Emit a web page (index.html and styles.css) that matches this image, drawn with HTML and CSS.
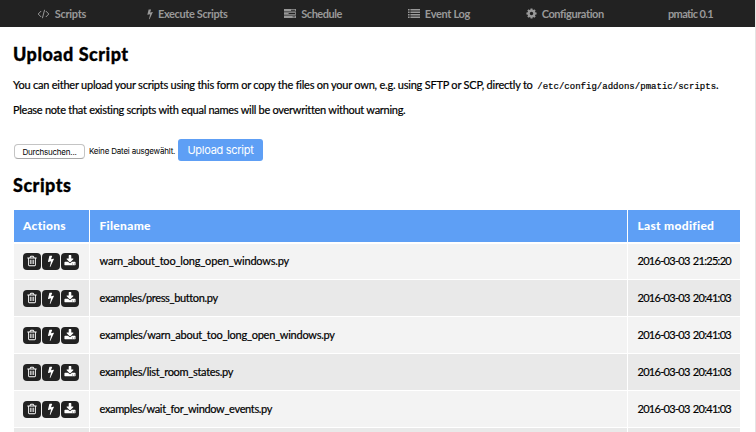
FILE: index.html
```html
<!DOCTYPE html>
<html lang="en">
<head>
<meta charset="utf-8">
<title>pmatic</title>
<link rel="stylesheet" href="styles.css">
</head>
<body>
<svg class="defs" width="0" height="0">
  <symbol id="trash" viewBox="0 0 1792 1792"><path d="M704 736v576q0 14-9 23t-23 9h-64q-14 0-23-9t-9-23v-576q0-14 9-23t23-9h64q14 0 23 9t9 23zm256 0v576q0 14-9 23t-23 9h-64q-14 0-23-9t-9-23v-576q0-14 9-23t23-9h64q14 0 23 9t9 23zm256 0v576q0 14-9 23t-23 9h-64q-14 0-23-9t-9-23v-576q0-14 9-23t23-9h64q14 0 23 9t9 23zm128 724v-948h-896v948q0 22 7 40.500t14.500 27 10.500 8.500h832q3 0 10.500-8.500t14.500-27 7-40.500zm-672-1076h448l-48-117q-7-9-17-11h-317q-10 2-17 11zm928 32v64q0 14-9 23t-23 9h-96v948q0 83-47 143.500t-113 60.500h-832q-66 0-113-58.500t-47-141.500v-952h-96q-14 0-23-9t-9-23v-64q0-14 9-23t23-9h309l70-167q15-37 54-63t79-26h320q40 0 79 26t54 63l70 167h309q14 0 23 9t9 23z"/></symbol>
  <symbol id="bolt" viewBox="0 0 1792 1792"><path d="M1333 566q18 20 7 44l-540 1157q-13 25-42 25-4 0-14-2-17-5-25.500-19t-4.500-30l197-808-406 101q-4 1-12 1-18 0-31-11-18-15-13-39l201-825q4-14 16-23t28-9h328q19 0 32 12.500t13 29.500q0 8-5 18l-171 463 396-98q8-2 12-2 19 0 34 15z"/></symbol>
  <symbol id="download" viewBox="0 0 1792 1792"><path d="M1344 1344q0-26-19-45t-45-19-45 19-19 45 19 45 45 19 45-19 19-45zm256 0q0-26-19-45t-45-19-45 19-19 45 19 45 45 19 45-19 19-45zm128-224v320q0 40-28 68t-68 28h-1472q-40 0-68-28t-28-68v-320q0-40 28-68t68-28h465l135 136q58 56 136 56t136-56l136-136h464q40 0 68 28t28 68zm-325-569q17 41-14 70l-448 448q-18 19-45 19t-45-19l-448-448q-31-29-14-70 17-39 59-39h256v-448q0-26 19-45t45-19h256q26 0 45 19t19 45v448h256q42 0 59 39z"/></symbol>
  <symbol id="cog" viewBox="0 0 1792 1792"><path d="M1152 896q0-106-75-181t-181-75-181 75-75 181 75 181 181 75 181-75 75-181zm512-109v222q0 12-8 23t-20 13l-185 28q-19 54-39 91 35 50 107 138 10 12 10 25t-9 23q-27 37-99 108t-94 71q-12 0-26-9l-138-108q-44 23-91 38-16 136-29 186-7 28-36 28h-222q-14 0-24.500-8.500t-11.500-21.500l-28-184q-49-16-90-37l-141 107q-10 9-25 9-14 0-25-11-126-114-165-168-7-10-7-23 0-12 8-23 15-21 51-66.500t54-70.500q-27-50-41-99l-183-27q-13-2-21-12.500t-8-23.500v-222q0-12 8-23t19-13l186-28q14-46 39-92-40-57-107-138-10-12-10-24 0-10 9-23 26-36 98.500-107.500t94.500-71.500q13 0 26 10l138 107q44-23 91-38 16-136 29-186 7-28 36-28h222q14 0 24.500 8.500t11.500 21.500l28 184q49 16 90 37l142-107q9-9 24-9 13 0 25 10 129 119 165 170 7 8 7 22 0 12-8 23-15 21-51 66.500t-54 70.500q26 50 41 98l183 28q13 2 21 12.500t8 23.500z"/></symbol>
</svg>

<nav class="nav">
  <a class="nav-item n-scripts"><svg width="13" height="10" viewBox="0 0 13 10" fill="none" stroke="currentColor"><path d="M4.200 2 1.200 5l3 3M8.800 2l3 3-3 3M7.600.8 5.400 9.200"/></svg><span>Scripts</span></a>
  <a class="nav-item n-execute"><svg class="bolt" width="6" height="12" viewBox="380 0 1000 1792"><use href="#bolt" width="1792" height="1792"/></svg><span>Execute Scripts</span></a>
  <a class="nav-item n-schedule"><svg width="12" height="9" viewBox="0 0 12 9" fill="currentColor"><path fill-rule="evenodd" d="M0 0h12v2.500H0zM7 .8v.9h4.200V.8zM0 3.300h12v2.500H0zM4.600 4.100V5h6.600v-.9zM0 6.600h12V9H0zM8.600 7.400v.8h2.600v-.8z"/></svg><span>Schedule</span></a>
  <a class="nav-item n-log"><svg width="12" height="9" viewBox="0 0 12 9" fill="currentColor"><path d="M0 0h1.600v1.400H0zM2.400 0H12v1.400H2.400zM0 2.500h1.600v1.400H0zM2.400 2.500H12v1.400H2.400zM0 5h1.600v1.400H0zM2.400 5H12v1.400H2.400zM0 7.500h1.600v1.400H0zM2.400 7.500H12v1.400H2.400z"/></svg><span>Event Log</span></a>
  <a class="nav-item n-config"><svg width="11" height="11" viewBox="64 64 1664 1664" fill="currentColor"><use href="#cog" width="1792" height="1792"/></svg><span>Configuration</span></a>
  <a class="nav-item n-version"><span>pmatic 0.1</span></a>
</nav>

<main class="content">
  <h1>Upload Script</h1>
  <p class="intro">You can either upload your scripts using this form or copy the files on your own, e.g. using SFTP or SCP, directly to <code>/etc/config/addons/pmatic/scripts</code>.</p>
  <p class="note">Please note that existing scripts with equal names will be overwritten without warning.</p>

  <form class="upload">
    <button type="button" class="browse">Durchsuchen...</button>
    <span class="nofile">Keine Datei ausgewählt.</span>
    <button type="button" class="submit">Upload script</button>
  </form>

  <h1>Scripts</h1>
  <table>
    <colgroup><col class="c-actions"><col class="c-file"><col class="c-date"></colgroup>
    <thead><tr><th>Actions</th><th>Filename</th><th>Last modified</th></tr></thead>
    <tbody>
      <tr><td><div class="actions"><a><svg><use href="#trash"/></svg></a><a><svg><use href="#bolt"/></svg></a><a><svg><use href="#download"/></svg></a></div></td><td class="t1">warn_about_too_long_open_windows.py</td><td class="date">2016-03-03 21:25:20</td></tr>
      <tr><td><div class="actions"><a><svg><use href="#trash"/></svg></a><a><svg><use href="#bolt"/></svg></a><a><svg><use href="#download"/></svg></a></div></td><td class="t2">examples/press_button.py</td><td class="date">2016-03-03 20:41:03</td></tr>
      <tr><td><div class="actions"><a><svg><use href="#trash"/></svg></a><a><svg><use href="#bolt"/></svg></a><a><svg><use href="#download"/></svg></a></div></td><td class="t3">examples/warn_about_too_long_open_windows.py</td><td class="date">2016-03-03 20:41:03</td></tr>
      <tr><td><div class="actions"><a><svg><use href="#trash"/></svg></a><a><svg><use href="#bolt"/></svg></a><a><svg><use href="#download"/></svg></a></div></td><td class="t4">examples/list_room_states.py</td><td class="date">2016-03-03 20:41:03</td></tr>
      <tr><td><div class="actions"><a><svg><use href="#trash"/></svg></a><a><svg><use href="#bolt"/></svg></a><a><svg><use href="#download"/></svg></a></div></td><td class="t5">examples/wait_for_window_events.py</td><td class="date">2016-03-03 20:41:03</td></tr>
      <tr class="cut"><td></td><td></td><td></td></tr>
    </tbody>
  </table>
</main>
</body>
</html>
```
FILE: styles.css
```css
* { box-sizing: border-box; }
html { overflow: hidden; }
body {
  margin: 0;
  height: 432px;
  overflow: hidden;
  border-right: 1px solid #e4e4e4;
  background: #fff;
  color: #000;
  font: 11px/16px "Gill Sans", Lato, sans-serif;
  font-kerning: normal;
}
.defs { display: block; height: 0; }

.nav { display: flex; height: 27px; background: #222; color: #999; }
.nav-item {
  flex: 1 1 0;
  display: flex;
  align-items: center;
  justify-content: center;
  gap: 5px;
  padding-right: 3px;
  font-weight: 700;
  white-space: nowrap;
}
.nav-item svg { flex: none; fill: currentColor; }
.nav-item.n-scripts svg { fill: none; }
.n-scripts { letter-spacing: -0.3px; }
.n-execute { letter-spacing: -0.37px; }
.n-schedule { letter-spacing: -0.5px; }
.n-log { letter-spacing: -0.33px; }
.n-config { letter-spacing: -0.4px; }
.n-version { letter-spacing: -0.6px; }

.content { padding: 16px 14px 0 13px; }
h1 { margin: 0; font-size: 18px; line-height: 22px; font-weight: 900; letter-spacing: 0.5px; -webkit-text-stroke: 0.3px #000; }
p { margin: 0; white-space: nowrap; }
p, td { -webkit-text-stroke: 0.2px #000; }
.intro { margin-top: 12px; letter-spacing: -0.227px; }
.note { margin-top: 9px; letter-spacing: -0.277px; }
code { font: 9px/10px "Liberation Mono", monospace; letter-spacing: 0.02px; margin-left: 2px; }

.upload { display: flex; align-items: center; height: 22px; margin: 21px 0 13px 1px; font-family: Inter, sans-serif; }
button { padding: 0; font-family: inherit; white-space: nowrap; }
.browse {
  width: 71px;
  height: 15px;
  margin-top: 3px;
  border: 1px solid #c4c4c4;
  border-bottom-color: #a8a8a8;
  border-radius: 4px;
  background: #fff;
  color: #000;
  font-size: 8px;
  line-height: 12px;
  letter-spacing: -0.22px;
}
.nofile { width: 89px; margin-top: 2px; margin-left: 4px; font-size: 8px; letter-spacing: -0.19px; white-space: nowrap; }
.submit {
  width: 85px;
  height: 22px;
  border: 0;
  border-radius: 3px;
  background: #5e9ff5;
  color: #fff;
  font-size: 11px;
  letter-spacing: -0.28px;
}

table { width: 726px; margin: 14px 0 0 1px; border-spacing: 0; table-layout: fixed; }
.c-actions { width: 76px; }
.c-file { width: 538px; }
.c-date { width: 112px; }
th, td { padding: 0 0 0 9px; text-align: left; white-space: nowrap; border-right: 1px solid #fff; border-bottom: 1px solid #fff; }
th:last-child, td:last-child { border-right: 0; }
th { height: 33px; background: #5e9ff5; color: #fff; font-size: 12px; font-weight: 900; letter-spacing: 0.3px; }
th + th, td + td { padding-left: 9.500px; }
td { height: 37px; background: #f3f3f3; }
tbody tr:first-child td { border-top: 1px solid #fff; padding-bottom: 1px; }
tbody tr:nth-child(even) td { background: #e9e9e9; }
tbody tr.cut td { height: 4px; border-bottom: 0; }
.t1 { letter-spacing: -0.19px; }
.t2 { letter-spacing: -0.36px; }
.t3 { letter-spacing: -0.25px; }
.t4 { letter-spacing: -0.31px; }
.t5 { letter-spacing: -0.34px; }
.date { letter-spacing: -0.7px; word-spacing: 1px; }

.actions { display: flex; gap: 1px; }
.actions a { display: flex; align-items: center; justify-content: center; width: 18px; height: 17px; border-radius: 4px; background: #222; }
.actions svg { width: 12px; height: 12px; fill: #fff; }
```
